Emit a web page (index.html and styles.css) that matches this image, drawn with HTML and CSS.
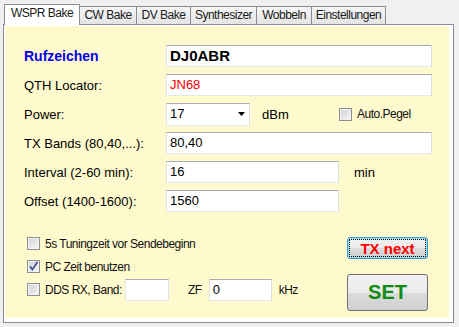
FILE: index.html
```html
<!DOCTYPE html>
<html lang="de">
<head>
<meta charset="utf-8">
<title>WSPR Bake</title>
<link rel="stylesheet" href="styles.css">
</head>
<body>
<div class="window">
  <div class="tabs">
    <div class="tab active t-wspr">WSPR Bake</div>
    <div class="tab t-cw">CW Bake</div>
    <div class="tab t-dv">DV Bake</div>
    <div class="tab t-syn">Synthesizer</div>
    <div class="tab t-wob">Wobbeln</div>
    <div class="tab t-ein">Einstellungen</div>
  </div>
  <div class="panel">
    <div class="page">
      <div class="form">
        <div class="row">
          <span class="label call">Rufzeichen</span>
          <div class="field w-full bold-value">DJ0ABR</div>
        </div>
        <div class="row">
          <span class="label">QTH Locator:</span>
          <div class="field w-full red-value">JN68</div>
        </div>
        <div class="row">
          <span class="label">Power:</span>
          <div class="field select">
            <span>17</span>
            <svg class="arrow" width="7" height="4" viewBox="0 0 7 4"><polygon points="0,0 7,0 3.5,4" fill="#000"/></svg>
          </div>
          <span class="unit unit-dbm">dBm</span>
          <span class="cb"></span>
          <span class="small">Auto.Pegel</span>
        </div>
        <div class="row">
          <span class="label">TX Bands (80,40,...):</span>
          <div class="field w-full">80,40</div>
        </div>
        <div class="row">
          <span class="label">Interval (2-60 min):</span>
          <div class="field w-mid">16</div>
          <span class="unit unit-min">min</span>
        </div>
        <div class="row">
          <span class="label">Offset (1400-1600):</span>
          <div class="field w-mid">1560</div>
        </div>
      </div>
      <div class="bottom">
        <div class="checks">
          <div class="check-row">
            <span class="cb"></span>
            <span class="small">5s Tuningzeit vor Sendebeginn</span>
          </div>
          <div class="check-row">
            <span class="cb checked"><svg width="13" height="13" viewBox="0 0 13 13"><path d="M3 6.2 L5.4 9.6 L10.6 1.8" fill="none" stroke="#3d4f92" stroke-width="1.7"/></svg></span>
            <span class="small">PC Zeit benutzen</span>
          </div>
          <div class="check-row">
            <span class="cb"></span>
            <span class="small dds">DDS RX, Band:</span>
            <div class="field w-band"></div>
            <span class="small zf">ZF</span>
            <div class="field w-zf">0</div>
            <span class="small khz">kHz</span>
          </div>
        </div>
        <div class="buttons">
          <div class="btn btn-tx">TX next</div>
          <div class="btn btn-set">SET</div>
        </div>
      </div>
    </div>
  </div>
</div>
</body>
</html>
```

FILE: styles.css
```css
html, body {
  margin: 0;
  padding: 0;
}
body {
  background: #f0f0f0;
  width: 459px;
  height: 327px;
  overflow: hidden;
  font-family: "Liberation Sans", Arial, sans-serif;
  font-size: 13px;
  color: #000;
}
.window {
  padding: 4px 0 0 3px;
}
.tabs {
  display: flex;
  align-items: flex-end;
  height: 20px;
  padding-left: 1px;
  position: relative;
  z-index: 2;
}
.tab {
  box-sizing: border-box;
  height: 18px;
  border: 1px solid #898c95;
  border-bottom: none;
  margin-left: -1px;
  background: linear-gradient(#f6f6f6, #e4e4e4);
  font-family: "Liberation Sans", Arial, sans-serif;
  font-size: 12px;
  letter-spacing: -0.5px;
  line-height: 16px;
  text-align: center;
  white-space: nowrap;
  color: #1a1a1a;
}
.tab.active {
  height: 21px;
  margin-left: 0;
  margin-bottom: -1px;
  background: #fff;
  line-height: 17px;
  position: relative;
  z-index: 3;
}
.t-wspr { width: 76px; }
.t-cw { width: 58px; }
.t-dv { width: 55px; }
.t-syn { width: 67px; }
.t-wob { width: 56px; }
.t-ein { width: 75px; }

.panel {
  box-sizing: border-box;
  width: 451px;
  height: 299px;
  border: 1px solid #898c95;
  background: #fff;
  padding: 1px 4px 4px 1px;
}
.page {
  box-sizing: border-box;
  height: 100%;
  background: #fffacd;
  padding: 19px 0 0 19px;
}
.form {
  display: flex;
  flex-direction: column;
  gap: 7px;
}
.row {
  display: flex;
  align-items: center;
  height: 22px;
}
.label {
  width: 142px;
  flex: none;
  font-size: 13px;
}
.label.call {
  color: #0000f0;
  font-weight: bold;
  font-size: 14px;
}
.field {
  box-sizing: border-box;
  height: 22px;
  flex: none;
  background: #fff;
  border: 1px solid;
  border-color: #abadb3 #dbdfe6 #e3e9ef #e2e3ea;
  padding: 0 3px;
  font-size: 13px;
  line-height: 20px;
  white-space: nowrap;
}
.w-full { width: 266px; }
.w-mid { width: 173px; }
.bold-value {
  font-weight: bold;
  font-size: 15px;
}
.red-value { color: #f00; }
.select {
  width: 84px;
  display: flex;
  align-items: center;
  justify-content: space-between;
  padding-right: 4px;
  height: 23px;
}
.arrow { display: block; }
.unit { flex: none; }
.unit-dbm {
  margin-left: 12px;
  width: 77px;
}
.unit-min { margin-left: 15px; }
.small {
  font-family: "Liberation Sans", Arial, sans-serif;
  font-size: 12px;
  letter-spacing: -0.5px;
  white-space: nowrap;
  color: #111;
}
.cb {
  box-sizing: border-box;
  flex: none;
  width: 13px;
  height: 13px;
  border: 1px solid #8e8f8f;
  background: linear-gradient(135deg, #cdd0d5, #f7f7f7);
  box-shadow: inset 0 0 0 1px #f4f4f4;
  margin-right: 5px;
  position: relative;
}
.cb svg {
  position: absolute;
  left: -1px;
  top: -1px;
}
.bottom {
  display: flex;
  margin-top: 20px;
  margin-left: 3px;
}
.checks {
  width: 320px;
  display: flex;
  flex-direction: column;
}
.check-row {
  display: flex;
  align-items: center;
  height: 23px;
}
.dds { width: 75px; }
.w-band {
  width: 44px;
  margin-left: 5px;
}
.zf { margin-left: 19px; margin-right: 7px; }
.w-zf { width: 63px; }
.khz { margin-left: 7px; }
.buttons {
  display: flex;
  flex-direction: column;
  padding-top: 5px;
}
.btn {
  box-sizing: border-box;
  width: 81px;
  border: 1px solid #707070;
  border-radius: 3px;
  background: linear-gradient(#f2f2f2 0%, #ebebeb 50%, #dddddd 50%, #cfcfcf 100%);
  font-family: "Liberation Sans", Arial, sans-serif;
  font-weight: bold;
  display: flex;
  align-items: center;
  justify-content: center;
}
.btn-tx {
  height: 22px;
  color: #f00;
  font-size: 15px;
  border-color: #3c9ccf;
  box-shadow: inset 0 0 0 1px #8fdcf6;
  outline: 1px dotted #000;
  outline-offset: -3px;
}
.btn-set {
  height: 37px;
  margin-top: 15px;
  color: #118a11;
  font-size: 20px;
}
```
